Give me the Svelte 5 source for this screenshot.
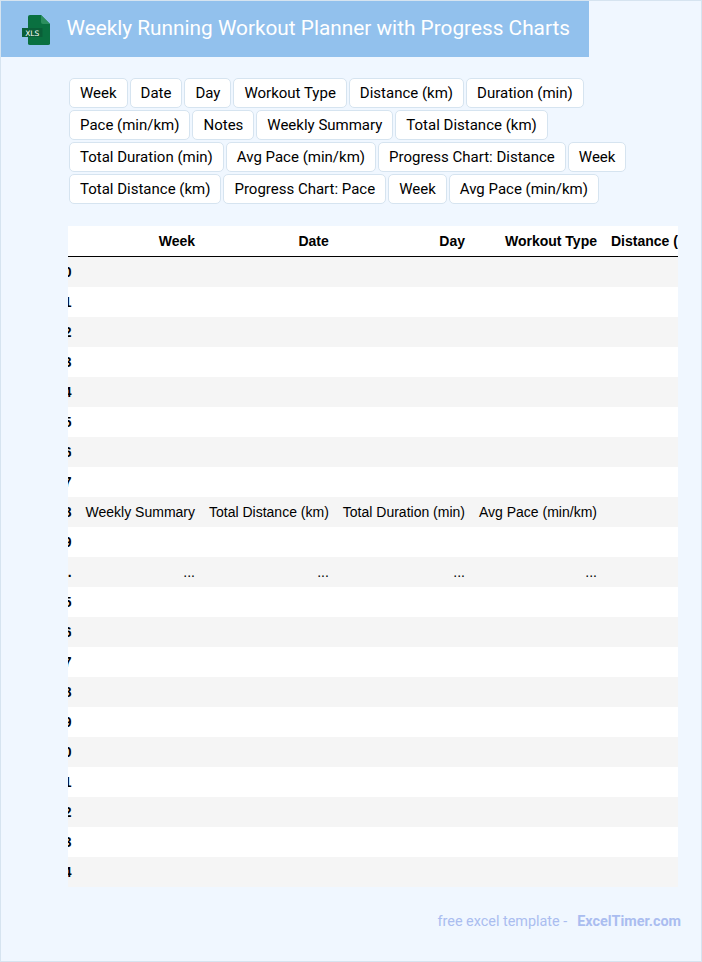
<script>
  const tags = ['Week','Date','Day','Workout Type','Distance (km)','Duration (min)','Pace (min/km)','Notes','Weekly Summary','Total Distance (km)','Total Duration (min)','Avg Pace (min/km)','Progress Chart: Distance','Week','Total Distance (km)','Progress Chart: Pace','Week','Avg Pace (min/km)'];
  const heads = ['Week','Date','Day','Workout Type','Distance (km)','Duration (min)'];
  const blank = heads.map(() => '');
  const rows = [];
  for (let i = 10; i < 18; i++) rows.push([i, ...blank]);
  rows.push([18, 'Weekly Summary','Total Distance (km)','Total Duration (min)','Avg Pace (min/km)','','']);
  rows.push([19, ...blank]);
  rows.push(['...', ...heads.map(() => '...')]);
  for (let i = 25; i < 35; i++) rows.push([i, ...blank]);
</script>

<div class="page">
  <header class="banner">
    <svg class="logo" viewBox="0 0 30 32" width="30" height="32" aria-hidden="true">
      <path d="M7 1.5Q7 0 9 0H20L29 9V28.500Q29 30 27 30H9Q7 30 7 28.500Z" fill="#0a7040"/>
      <path d="M20 0L29 9H22Q20 9 20 7Z" fill="#2c8f5e"/>
      <rect x="1" y="13" width="20.500" height="9" fill="#0a5f38"/>
      <text x="11.200" y="20.500" text-anchor="middle" class="logo-text">XLS</text>
    </svg>
    <h1>Weekly Running Workout Planner with Progress Charts</h1>
  </header>

  <div class="tags">
    {#each tags as tag}
      <span class="tag">{tag}</span>
    {/each}
  </div>

  <div class="table-wrap">
    <table>
      <thead>
        <tr>
          <th></th>
          {#each heads as h}<th>{h}</th>{/each}
        </tr>
      </thead>
      <tbody>
        {#each rows as row}
          <tr>
            <th class="idx">{row[0]}</th>
            {#each row.slice(1) as cell}<td>{cell}</td>{/each}
          </tr>
        {/each}
      </tbody>
    </table>
  </div>

  <footer class="foot">
    <span>free excel template -</span>
    <strong>ExcelTimer.com</strong>
  </footer>
</div>

<style>
  :global(body) {
    margin: 0;
  }
  .page {
    box-sizing: border-box;
    width: 702px;
    height: 962px;
    background: #f0f7ff;
    border: 1px solid #d6e4f0;
    font-family: Roboto, sans-serif;
    overflow: hidden;
  }
  .banner {
    box-sizing: border-box;
    width: 588px;
    height: 56px;
    background: #92c1ed;
    display: flex;
    align-items: center;
    gap: 16px;
    padding-left: 20px;
  }
  .logo {
    flex: none;
    margin-top: 4px;
  }
  .logo-text {
    font-family: "DejaVu Sans", sans-serif;
    font-size: 7.500px;
    font-weight: 400;
    fill: #fff;
  }
  h1 {
    margin: 0 0 2px -0.5px;
    font-size: 20.800px;
    font-weight: 400;
    color: #fff;
    white-space: nowrap;
  }
  .tags {
    display: flex;
    flex-wrap: wrap;
    gap: 2px;
    margin: 21px 20px 0 68px;
  }
  .tag {
    box-sizing: border-box;
    height: 30px;
    line-height: 28px;
    padding: 0 10px;
    background: #fff;
    border: 1px solid #d6e4f0;
    border-radius: 5px;
    font-size: 15px;
    color: #000;
    white-space: nowrap;
  }
  .table-wrap {
    margin: 22px 23px 0 67px;
    overflow: hidden;
  }
  table {
    border-collapse: separate;
    border-spacing: 0;
    margin-left: -19px;
    background: #fff;
    font-family: Arial, "Liberation Sans", sans-serif;
    font-size: 14px;
    color: #000;
  }
  th, td {
    box-sizing: border-box;
    height: 30px;
    padding: 0 7px;
    text-align: right;
    white-space: nowrap;
    font-weight: 400;
  }
  th {
    font-weight: 700;
  }
  thead th {
    height: 31px;
    border-bottom: 1px solid #000;
  }
  tbody tr:nth-child(odd) {
    background: #f5f5f5;
  }
  .foot {
    display: flex;
    justify-content: flex-end;
    gap: 10px;
    margin: 27px 20px 0 0;
    font-size: 14.400px;
    line-height: 16px;
    color: #aabdf0;
  }
  .foot strong {
    font-weight: 700;
  }
</style>
